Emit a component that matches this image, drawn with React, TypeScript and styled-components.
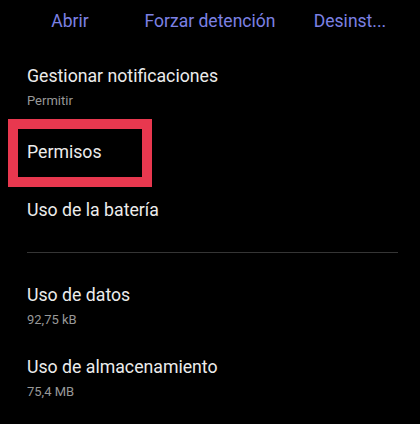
import React from 'react';
import styled, { createGlobalStyle } from 'styled-components';

type Setting = {
  title: string;
  summary?: string;
};

const GlobalStyle = createGlobalStyle`
  html, body {
    margin: 0;
    padding: 0;
    background: #000;
  }
  body {
    font-family: Roboto, 'Noto Sans', 'Liberation Sans', sans-serif;
    -webkit-font-smoothing: antialiased;
  }
`;

const Screen = styled.div`
  width: 420px;
  height: 424px;
  background: #000;
  overflow: hidden;
`;

const ActionBar = styled.div`
  display: grid;
  grid-template-columns: 140px 140px 140px;
  justify-items: center;
  padding-top: 9px;
`;

const ActionButton = styled.button`
  background: none;
  border: 0;
  padding: 0;
  font-family: inherit;
  font-size: 17.5px;
  font-weight: 400;
  line-height: 24px;
  color: #7c81e4;
  white-space: nowrap;
`;

const Row = styled.div<{ $top: number }>`
  display: flex;
  flex-direction: column;
  padding-left: 27px;
  margin-top: ${({ $top }) => $top}px;
`;

const Title = styled.div`
  font-size: 17.7px;
  line-height: 24px;
  color: #ececec;
`;

const Summary = styled.div`
  margin-top: 4px;
  font-size: 13px;
  line-height: 18px;
  color: #989898;
`;

// red annotation frame drawn around "Permisos"
const Highlight = styled.div`
  width: 115px;
  margin: 9px 0 0 8px;
  border: 10px solid #e8384f;
  padding: 11px 0 13px 9px;
`;

const Divider = styled.hr`
  margin: 30px 22px 0 27px;
  border: 0;
  height: 1px;
  background: #353535;
`;

const SettingRow = ({ title, summary, top }: Setting & { top: number }) => (
  <Row $top={top}>
    <Title>{title}</Title>
    {summary ? <Summary>{summary}</Summary> : null}
  </Row>
);

export default function App() {
  return (
    <Screen>
      <GlobalStyle />
      <ActionBar>
        <ActionButton>Abrir</ActionButton>
        <ActionButton>Forzar detención</ActionButton>
        <ActionButton>Desinst...</ActionButton>
      </ActionBar>
      <SettingRow top={31} title="Gestionar notificaciones" summary="Permitir" />
      <Highlight>
        <Title>Permisos</Title>
      </Highlight>
      <SettingRow top={11} title="Uso de la batería" />
      <Divider />
      <SettingRow top={30} title="Uso de datos" summary="92,75 kB" />
      <SettingRow top={26} title="Uso de almacenamiento" summary="75,4 MB" />
    </Screen>
  );
}
